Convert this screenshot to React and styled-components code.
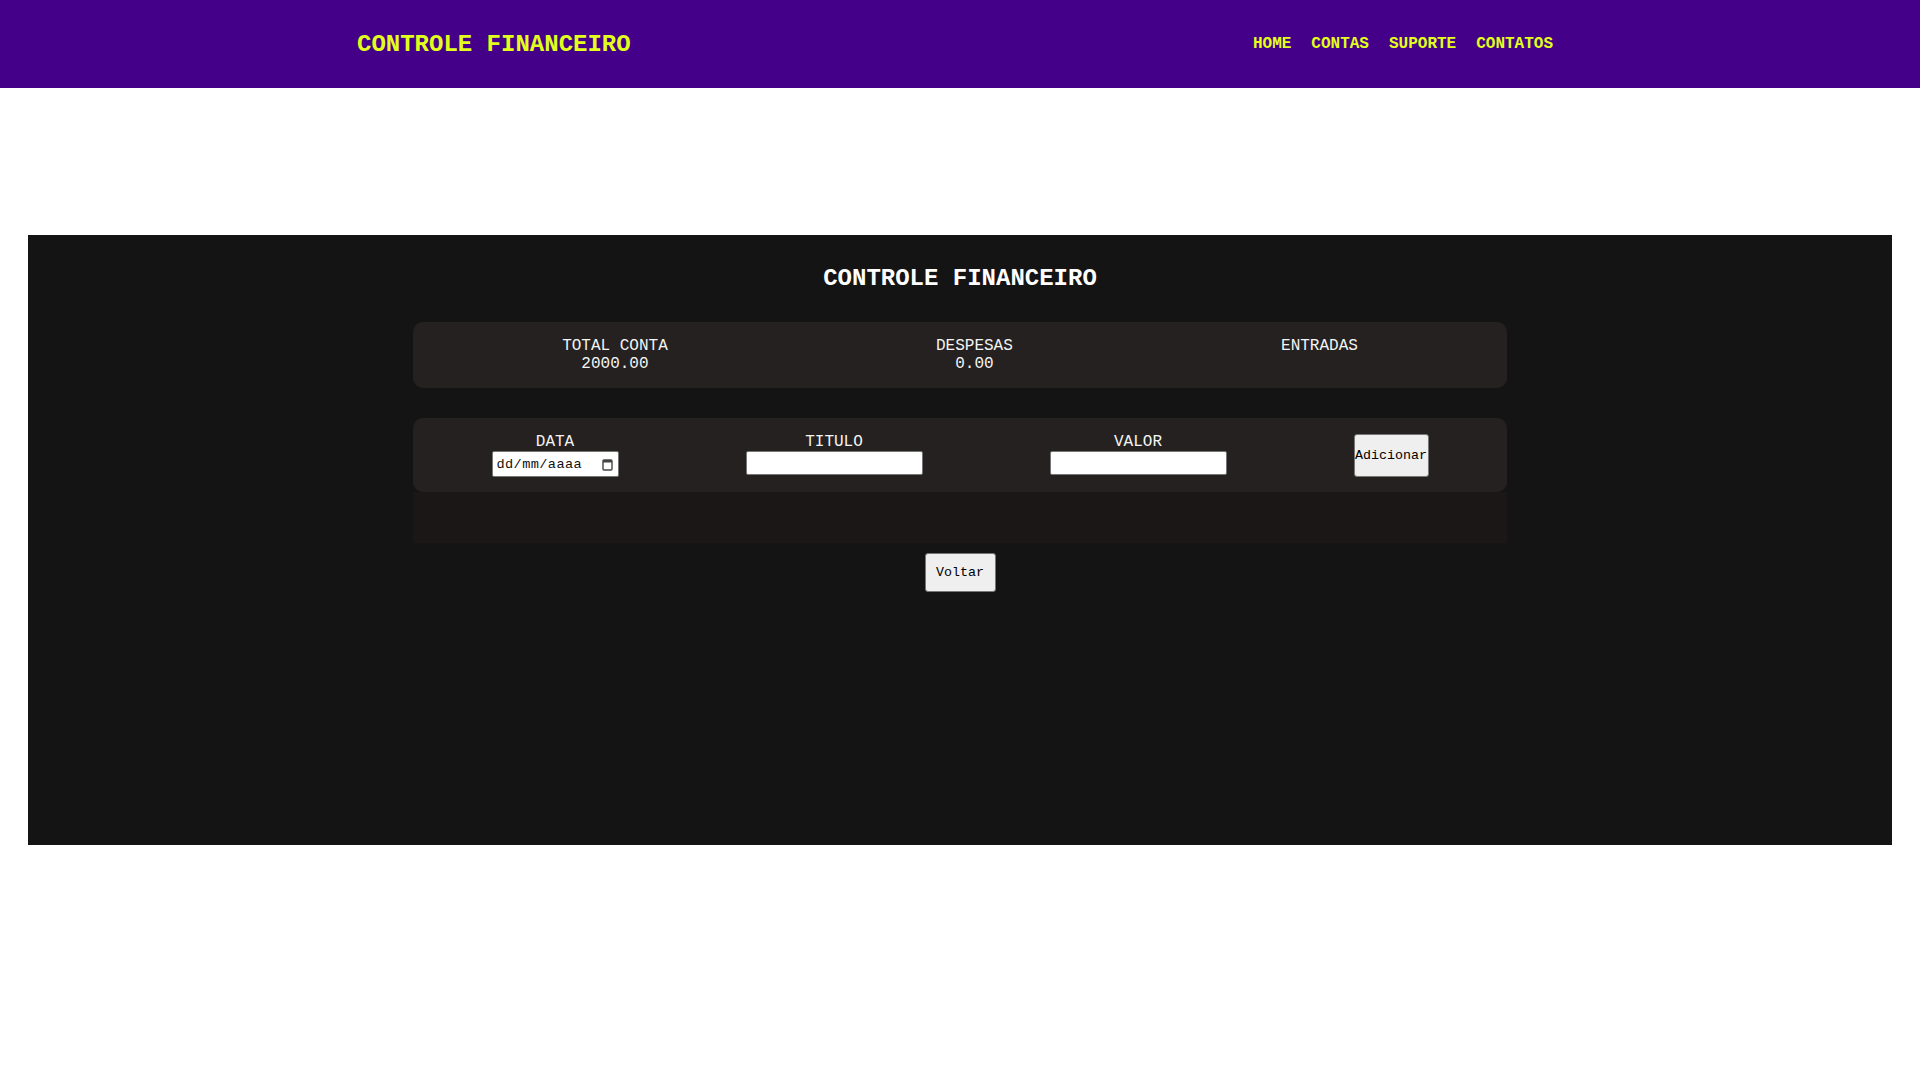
import React from "react";
import styled, { createGlobalStyle } from "styled-components";

const GlobalStyle = createGlobalStyle`
  body {
    margin: 0;
    background: #ffffff;
    font-family: "Liberation Mono", "Courier New", monospace;
  }
`;

const Header = styled.header`
  height: 88px;
  background-color: #450089;
  display: flex;
  justify-content: center;
`;

const HeaderInner = styled.div`
  width: 1206px;
  display: flex;
  align-items: center;
  justify-content: space-between;
`;

const Brand = styled.h1`
  margin: 0;
  font-size: 24px;
  font-weight: bold;
  color: #e2ff1c;
`;

const Nav = styled.nav`
  display: flex;
`;

const NavLink = styled.a`
  margin: 0 10px;
  font-size: 16px;
  font-weight: bold;
  color: #e2ff1c;
  text-decoration: none;
  cursor: pointer;
`;

const Section = styled.main`
  margin: 147px 28px 0;
  min-height: 610px;
  box-sizing: border-box;
  background-color: #141414;
  padding-top: 30px;
  display: flex;
  flex-direction: column;
  align-items: center;
`;

const Title = styled.h2`
  margin: 0 0 30px;
  font-size: 24px;
  line-height: 27px;
  font-weight: bold;
  color: #ffffff;
`;

const Card = styled.div`
  width: 1094px;
  box-sizing: border-box;
  background-color: #252120;
  border-radius: 10px;
  padding: 15px;
  display: flex;
  justify-content: space-around;
  align-items: flex-start;
  margin-bottom: ${(p) => p.$gap || 0}px;
`;

const Stat = styled.div`
  text-align: center;
  color: #f4f4f4;
  font-size: 16px;
  line-height: 18px;
`;

const Field = styled.label`
  display: flex;
  flex-direction: column;
  align-items: center;
  color: #f4f4f4;
  font-size: 16px;
  line-height: 18px;
`;

const Input = styled.input`
  box-sizing: border-box;
  width: ${(p) => p.$w}px;
  height: ${(p) => p.$h}px;
  margin: 0;
  padding: 1px 3px;
  border: 1px solid #767676;
  border-radius: 2px;
  background: #ffffff;
  font-family: "Liberation Mono", "Courier New", monospace;
  font-size: 13.33px;
  color: #111;
`;

const DateBox = styled.div`
  box-sizing: border-box;
  width: 127px;
  height: 26px;
  display: flex;
  align-items: center;
  padding: 0 5px 0 4px;
  border: 1px solid #767676;
  border-radius: 2px;
  background: #ffffff;
`;

const DateText = styled.input`
  flex: 1;
  min-width: 0;
  border: none;
  outline: none;
  padding: 0;
  background: transparent;
  font-family: "Liberation Mono", "Courier New", monospace;
  font-size: 13.6px;
  letter-spacing: 0.4px;
  color: #111;

  &::placeholder {
    color: #111;
  }
`;

const Button = styled.button`
  box-sizing: border-box;
  width: ${(p) => p.$w}px;
  height: ${(p) => p.$h}px;
  padding: 0;
  border: 1px solid #767676;
  border-radius: 3px;
  background-color: #efefef;
  font-family: "Liberation Mono", "Courier New", monospace;
  font-size: 13.33px;
  color: #000;
  cursor: pointer;
  align-self: center;
`;

const List = styled.div`
  width: 1094px;
  height: 51px;
  background-color: #1b1716;
  margin-bottom: 10px;
`;

const CalendarIcon = () => (
  <svg width="11" height="13" viewBox="0 0 11 13">
    <rect x="1" y="2" width="9" height="10" rx="1" fill="none" stroke="#444" strokeWidth="1.4" />
    <rect x="1" y="2" width="9" height="2.5" fill="#444" />
  </svg>
);

const stats = [
  { label: "TOTAL CONTA", value: "2000.00" },
  { label: "DESPESAS", value: "0.00" },
  { label: "ENTRADAS", value: "" },
];

export default function App() {
  return (
    <>
      <GlobalStyle />
      <Header>
        <HeaderInner>
          <Brand>CONTROLE FINANCEIRO</Brand>
          <Nav>
            <NavLink>HOME</NavLink>
            <NavLink>CONTAS</NavLink>
            <NavLink>SUPORTE</NavLink>
            <NavLink>CONTATOS</NavLink>
          </Nav>
        </HeaderInner>
      </Header>
      <Section>
        <Title>CONTROLE FINANCEIRO</Title>
        <Card $gap={30}>
          {stats.map((s) => (
            <Stat key={s.label}>
              <div>{s.label}</div>
              {s.value && <div>{s.value}</div>}
            </Stat>
          ))}
        </Card>
        <Card>
          <Field>
            DATA
            <DateBox>
              <DateText type="text" placeholder="dd/mm/aaaa" />
              <CalendarIcon />
            </DateBox>
          </Field>
          <Field>
            TITULO
            <Input type="text" $w={177} $h={24} />
          </Field>
          <Field>
            VALOR
            <Input type="number" $w={177} $h={24} />
          </Field>
          <Button $w={75} $h={43}>Adicionar</Button>
        </Card>
        <List />
        <Button $w={71} $h={39}>Voltar</Button>
      </Section>
    </>
  );
}
